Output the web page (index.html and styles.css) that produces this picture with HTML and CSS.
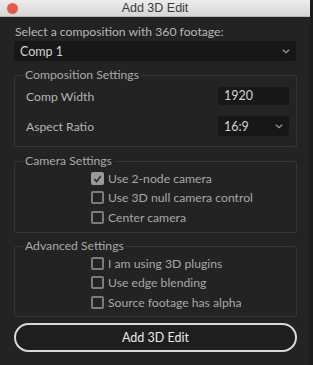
FILE: index.html
```html
<!DOCTYPE html>
<html>
<head>
<meta charset="utf-8">
<link rel="stylesheet" href="styles.css">
</head>
<body>
<div class="window">
  <div class="titlebar">
    <span class="close"></span>
    <span class="title">Add 3D Edit</span>
  </div>
  <div class="content">
    <div class="prompt">Select a composition with 360 footage:</div>
    <div class="select wide">
      <span>Comp 1</span>
      <svg class="chev" width="8" height="5" viewBox="0 0 8 5"><path d="M0.8 0.8 L4 3.8 L7.2 0.8" fill="none" stroke="#9a9a9a" stroke-width="1.2"/></svg>
    </div>

    <fieldset class="group comp">
      <legend>Composition Settings</legend>
      <div class="rows">
        <div class="row">
          <span class="label">Comp Width</span>
          <div class="input">1920</div>
        </div>
        <div class="row">
          <span class="label">Aspect Ratio</span>
          <div class="select small">
            <span>16:9</span>
            <svg class="chev" width="8" height="5" viewBox="0 0 8 5"><path d="M0.8 0.8 L4 3.8 L7.2 0.8" fill="none" stroke="#9a9a9a" stroke-width="1.2"/></svg>
          </div>
        </div>
      </div>
    </fieldset>

    <fieldset class="group checks">
      <legend>Camera Settings</legend>
      <div class="list">
        <div class="check"><span class="box on"><svg width="10" height="10" viewBox="0 0 10 10"><path d="M1.5 5.2 L4 7.8 L8.6 1.8" fill="none" stroke="#2a2a2a" stroke-width="1.8"/></svg></span>Use 2-node camera</div>
        <div class="check"><span class="box"></span>Use 3D null camera control</div>
        <div class="check"><span class="box"></span>Center camera</div>
      </div>
    </fieldset>

    <fieldset class="group checks adv">
      <legend>Advanced Settings</legend>
      <div class="list">
        <div class="check"><span class="box"></span>I am using 3D plugins</div>
        <div class="check"><span class="box"></span>Use edge blending</div>
        <div class="check"><span class="box"></span>Source footage has alpha</div>
      </div>
    </fieldset>

    <button class="action">Add 3D Edit</button>
  </div>
</div>
</body>
</html>
```

FILE: styles.css
```css
html, body {
  margin: 0;
  padding: 0;
  background: #232323;
}
body {
  font-family: "Lato", "Liberation Sans", sans-serif;
  font-size: 12px;
  color: #b4b4b4;
}
.window {
  width: 313px;
  height: 365px;
  background: #232323;
  box-sizing: border-box;
  border-right: 3px solid #1b1b1b;
}
.titlebar {
  height: 16px;
  background: linear-gradient(#ececec, #d6d6d6);
  border-bottom: 1px solid #b8b8b8;
  display: flex;
  align-items: center;
  justify-content: center;
  position: relative;
}
.close {
  position: absolute;
  left: 7px;
  top: 3px;
  width: 11px;
  height: 11px;
  border-radius: 50%;
  background: #e35b4b;
}
.title {
  font-family: "Liberation Sans", sans-serif;
  font-size: 12.5px;
  color: #3a3a3a;
}
.content {
  padding: 7px 0 0 14px;
  width: 283px;
}
.prompt {
  padding-left: 1px;
  height: 16px;
  line-height: 16px;
  color: #b8b8b8;
  font-size: 12.2px;
}
.select {
  display: flex;
  align-items: center;
  justify-content: space-between;
  background: #171717;
  border-radius: 2px;
  box-sizing: border-box;
}
.select.wide {
  margin-top: 1px;
  width: 282px;
  height: 20px;
  padding: 0 6px 0 6px;
  color: #d4d4d4;
  font-size: 12.5px;
}
.group {
  margin: 0;
  border: 1px solid #353535;
  border-radius: 2px;
  padding: 0;
  box-sizing: border-box;
  width: 283px;
}
.group legend {
  padding: 0 2px;
  margin-left: 8px;
  color: #aaaaaa;
  font-size: 12.2px;
  line-height: 14px;
}
.comp {
  margin-top: 7px;
  height: 79px;
}
.rows {
  display: flex;
  flex-direction: column;
  gap: 2px;
  padding: 0 7px 0 11px;
}
.row {
  display: flex;
  align-items: center;
  justify-content: space-between;
  height: 28px;
}
.label {
  color: #b4b4b4;
  font-size: 12.2px;
}
.input {
  width: 71px;
  height: 18px;
  line-height: 18px;
  box-sizing: border-box;
  background: #171717;
  padding-left: 6px;
  color: #d4d4d4;
  font-size: 12.5px;
  border-radius: 2px;
}
.select.small {
  width: 71px;
  height: 20px;
  padding: 0 6px;
  color: #d4d4d4;
  font-size: 12.5px;
}
.checks {
  margin-top: 7px;
  height: 79px;
}
.checks.adv {
  margin-top: 6px;
  height: 78px;
}
.list {
  padding: 1px 0 0 76px;
}
.check {
  display: flex;
  align-items: center;
  height: 19.3px;
  color: #a8a8a8;
  font-size: 12.2px;
}
.box {
  width: 13px;
  height: 13px;
  box-sizing: border-box;
  border: 2px solid #7c7c7c;
  border-radius: 2px;
  margin-right: 4px;
  display: flex;
  align-items: center;
  justify-content: center;
}
.box.on {
  background: #9a9a9a;
  border-color: #9a9a9a;
}
.action {
  margin-top: 6px;
  width: 283px;
  height: 29px;
  border: 2px solid #d8d8d8;
  border-radius: 15px;
  background: #1e1e1e;
  color: #e8e8e8;
  font-family: "Lato", "Liberation Sans", sans-serif;
  font-size: 12.5px;
  display: block;
}
```
